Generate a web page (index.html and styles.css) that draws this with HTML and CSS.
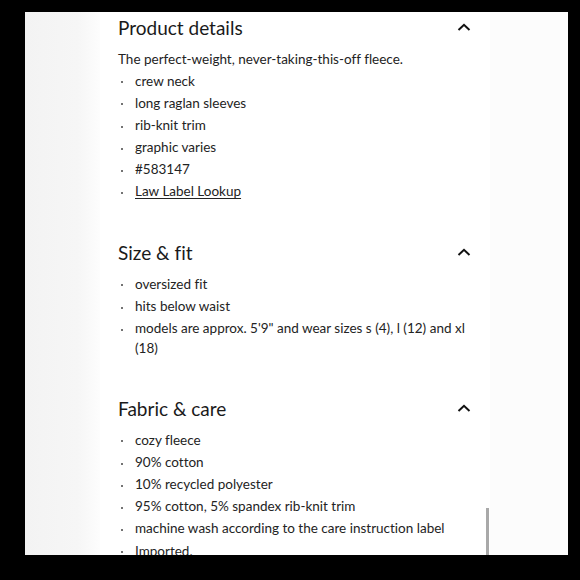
FILE: index.html
```html
<!DOCTYPE html>
<html lang="en">
<head>
<meta charset="utf-8">
<title>Product details</title>
<link rel="stylesheet" href="styles.css">
</head>
<body>
<div class="frame">
  <div class="side-left"></div>
  <main class="panel">
    <section class="section">
      <div class="section-head">
        <h2 class="section-title">Product details</h2>
        <svg class="chevron" viewBox="0 0 14 8" width="14" height="8"><path d="M1.5 7 L7 1.8 L12.5 7" fill="none" stroke="#111" stroke-width="2"/></svg>
      </div>
      <p class="intro">The perfect-weight, never-taking-this-off fleece.</p>
      <ul class="list">
        <li>crew neck</li>
        <li>long raglan sleeves</li>
        <li>rib-knit trim</li>
        <li>graphic varies</li>
        <li>#583147</li>
        <li><a class="link" href="#">Law Label Lookup</a></li>
      </ul>
    </section>
    <section class="section">
      <div class="section-head">
        <h2 class="section-title">Size &amp; fit</h2>
        <svg class="chevron" viewBox="0 0 14 8" width="14" height="8"><path d="M1.5 7 L7 1.8 L12.5 7" fill="none" stroke="#111" stroke-width="2"/></svg>
      </div>
      <ul class="list">
        <li>oversized fit</li>
        <li>hits below waist</li>
        <li>models are approx. 5'9" and wear sizes s (4), l (12) and xl (18)</li>
      </ul>
    </section>
    <section class="section">
      <div class="section-head">
        <h2 class="section-title">Fabric &amp; care</h2>
        <svg class="chevron" viewBox="0 0 14 8" width="14" height="8"><path d="M1.5 7 L7 1.8 L12.5 7" fill="none" stroke="#111" stroke-width="2"/></svg>
      </div>
      <ul class="list">
        <li>cozy fleece</li>
        <li>90% cotton</li>
        <li>10% recycled polyester</li>
        <li>95% cotton, 5% spandex rib-knit trim</li>
        <li>machine wash according to the care instruction label</li>
        <li>Imported.</li>
      </ul>
    </section>
    <div class="scrollbar"></div>
  </main>
  <div class="side-right"></div>
</div>
</body>
</html>
```
FILE: styles.css
```css
html, body {
  margin: 0;
  padding: 0;
}
body {
  width: 580px;
  height: 580px;
  background: #000;
  overflow: hidden;
  font-family: Lato, "Noto Sans", sans-serif;
  font-variant-ligatures: none;
  color: #232323;
}
.frame {
  margin: 12px 12px 0 25px;
  height: 543px;
  display: flex;
  background: #fff;
  overflow: hidden;
}
.side-left {
  width: 75px;
  flex: none;
  background: linear-gradient(to right, #f3f3f3 0%, #f6f6f6 70%, #fdfdfd 100%);
}
.side-right {
  flex: 1;
  background: #fcfcfc;
}
.panel {
  position: relative;
  width: 390px;
  flex: none;
  padding-left: 18px;
  box-sizing: border-box;
  background: #fff;
}
.section {
  margin-bottom: 34px;
}
.section-head {
  display: flex;
  align-items: center;
  justify-content: space-between;
  height: 30px;
  padding-right: 19px;
  margin-bottom: 6px;
}
.section-title {
  margin: 0;
  font-size: 19px;
  font-weight: 400;
  color: #1a1a1a;
}
.chevron {
  display: block;
}
.intro {
  margin: 0;
  font-size: 13.5px;
  line-height: 22.2px;
}
.list {
  list-style: none;
  margin: 0;
  padding: 0 20px 0 0;
  font-size: 13.5px;
}
.list li {
  position: relative;
  padding-left: 17px;
  line-height: 19.5px;
  padding-top: 1.35px;
  padding-bottom: 1.35px;
}
.list li::before {
  content: "";
  position: absolute;
  left: 3px;
  top: 11px;
  width: 2px;
  height: 2px;
  border-radius: 50%;
  background: #444;
}
.link {
  color: inherit;
  text-decoration: underline;
  text-underline-offset: 2px;
}
.scrollbar {
  position: absolute;
  right: 1px;
  top: 496px;
  width: 3px;
  height: 60px;
  background: #a9a9a9;
}
```
